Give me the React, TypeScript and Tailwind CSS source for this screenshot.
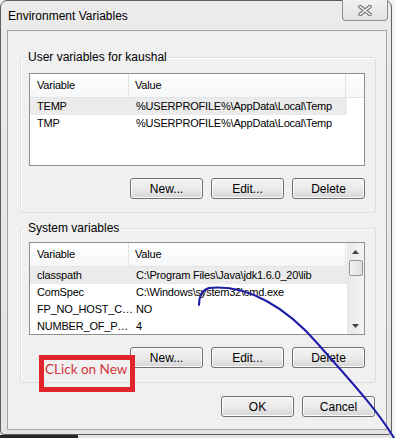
import React from 'react';

// --- Button ---
const WinButton: React.FC<{ children: React.ReactNode }> = ({ children }) => (
  <button className="h-[21px] w-[73px] rounded-[3px] border border-[#707070] bg-gradient-to-b from-[#f3f3f3] via-[#ebebeb] to-[#d6d6d6] text-[12px] leading-none text-black shadow-[inset_0_0_0_1px_#fcfcfc]">
    {children}
  </button>
);

// --- List row ---
const Row: React.FC<{ name: string; value: string; selected?: boolean }> = ({ name, value, selected }) => (
  <div className={`flex h-[17px] w-[317px] items-center ${selected ? 'bg-[#ebebeb]' : ''}`}>
    <div className="w-[100px] shrink-0 whitespace-nowrap pl-[7px]">{name}</div>
    <div className="whitespace-nowrap pl-[6px]">{value}</div>
  </div>
);

// --- List header ---
const Header: React.FC<{ extra?: boolean }> = ({ extra }) => (
  <div className="flex h-[24px] shrink-0 border-b border-[#e2e4e7] bg-gradient-to-b from-white to-[#f6f7f8]">
    <div className="flex w-[99px] shrink-0 items-center border-r border-[#e5e5e5] pl-[7px]">Variable</div>
    <div className="flex w-[217px] shrink-0 items-center border-r border-[#e5e5e5] pl-[6px]">Value</div>
    {extra && <div className="flex-1" />}
  </div>
);

// --- Scrollbar ---
const ScrollBar: React.FC = () => (
  <div className="flex w-[17px] flex-col items-center bg-gradient-to-r from-[#e8e8e8] to-[#f4f4f4]">
    <div className="flex h-[17px] w-full items-center justify-center">
      <svg width="7" height="4" viewBox="0 0 7 4"><path d="M3.5 0 7 4H0z" fill="#404040" /></svg>
    </div>
    <div className="h-[16px] w-[14px] rounded-[2px] border border-[#979797] bg-gradient-to-r from-[#f4f4f4] to-[#dedede]" />
    <div className="flex-1" />
    <div className="flex h-[17px] w-full items-center justify-center">
      <svg width="7" height="4" viewBox="0 0 7 4"><path d="M0 0h7L3.5 4z" fill="#404040" /></svg>
    </div>
  </div>
);

// --- Group box ---
const GroupBox: React.FC<{ label: string; className?: string; children: React.ReactNode }> = ({ label, className = '', children }) => (
  <div className={`relative ml-[12px] mr-[10px] rounded-[3px] border border-[#d5dfe5] shadow-[inset_1px_1px_0_#ffffff] ${className}`}>
    <span className="absolute left-[5px] top-[-8px] bg-[#f0f0f0] px-[2px] text-[12px] leading-[14px] tracking-normal">{label}</span>
    {children}
  </div>
);

const ButtonRow: React.FC = () => (
  <div className="flex justify-end gap-[8px] pr-[10px]">
    <WinButton>New...</WinButton>
    <WinButton>Edit...</WinButton>
    <WinButton>Delete</WinButton>
  </div>
);

export default function App() {
  return (
    <div className="relative h-[438px] w-[395px] overflow-hidden bg-[#f4f4f4] font-['Liberation_Sans',sans-serif] text-[12px] text-black">
      {/* window */}
      <div className="flex h-[435px] w-[392px] flex-col rounded-t-[7px] rounded-b-[4px] border border-[#5f5f5f] bg-gradient-to-b from-[#ebebeb] to-[#e3e3e3]">
        {/* title bar */}
        <div className="relative flex h-[29px] items-center pl-[7px] text-[12px]">
          Environment Variables
          <div className="absolute right-[3px] top-[-1px] flex h-[21px] w-[46px] items-center justify-center rounded-b-[4px] border border-t-0 border-[#8e8e8e] bg-gradient-to-b from-[#f2f2f2] to-[#e2e2e2]">
            <svg width="14" height="11" viewBox="0 0 14 11">
              <path d="M2 1.5 12 9.5M12 1.5 2 9.5" stroke="#6f6f6f" strokeWidth="3.6" strokeLinecap="round" />
              <path d="M2 1.5 12 9.5M12 1.5 2 9.5" stroke="#ffffff" strokeWidth="1.6" strokeLinecap="round" />
            </svg>
          </div>
        </div>
        {/* client */}
        <div className="ml-[6px] mr-[4px] h-[400px] border border-[#a3a3a3] bg-[#f0f0f0]">
          <GroupBox label="User variables for kaushal" className="mt-[26px] pb-[13px]">
            <div className="ml-[8px] mr-[10px] mt-[15px] h-[93px] border border-[#8e8f8f] bg-white text-[11px] tracking-[-0.2px]">
              <Header extra />
              <Row name="TEMP" value="%USERPROFILE%\AppData\Local\Temp" selected />
              <Row name="TMP" value="%USERPROFILE%\AppData\Local\Temp" />
            </div>
            <div className="mt-[12px]">
              <ButtonRow />
            </div>
          </GroupBox>

          <GroupBox label="System variables" className="mt-[15px] pb-[14px]">
            <div className="ml-[8px] mr-[10px] mt-[13px] flex h-[93px] border border-[#8e8f8f] bg-white text-[11px] tracking-[-0.2px]">
              <div className="w-[317px]">
                <Header />
                <Row name="classpath" value="C:\Program Files\Java\jdk1.6.0_20\lib" selected />
                <Row name="ComSpec" value="C:\Windows\system32\cmd.exe" />
                <Row name="FP_NO_HOST_C…" value="NO" />
                <Row name="NUMBER_OF_P…" value="4" />
              </div>
              <ScrollBar />
            </div>
            <div className="mt-[12px]">
              <ButtonRow />
            </div>
          </GroupBox>

          <div className="mt-[13px] flex justify-end gap-[8px] pr-[11px]">
            <WinButton>OK</WinButton>
            <WinButton>Cancel</WinButton>
          </div>
        </div>
      </div>
      {/* strip below the window */}
      <div className="flex h-[3px]">
        <div className="w-[78px] bg-[#262626]" />
        <div className="flex-1 bg-[#e4e4e4]" />
      </div>

      {/* annotation box */}
      <div className="absolute left-[39px] top-[355px] flex h-[37px] w-[96px] items-start whitespace-nowrap border-[5px] border-[#e2242c] pl-[1px] font-['Lato',sans-serif] text-[13.5px] leading-[18px] text-[#d2353a]">
        CLick on New
      </div>

      {/* hand-drawn arrow line */}
      <svg className="pointer-events-none absolute left-0 top-0" width="395" height="438" viewBox="0 0 395 438">
        <path
          d="M199 305 C199 296 202 290 209 288 C248 284 287 308 318 344 C343 373 374 405 394 438"
          fill="none"
          stroke="#1c1ca8"
          strokeWidth="2"
          strokeLinecap="round"
        />
      </svg>
    </div>
  );
}
